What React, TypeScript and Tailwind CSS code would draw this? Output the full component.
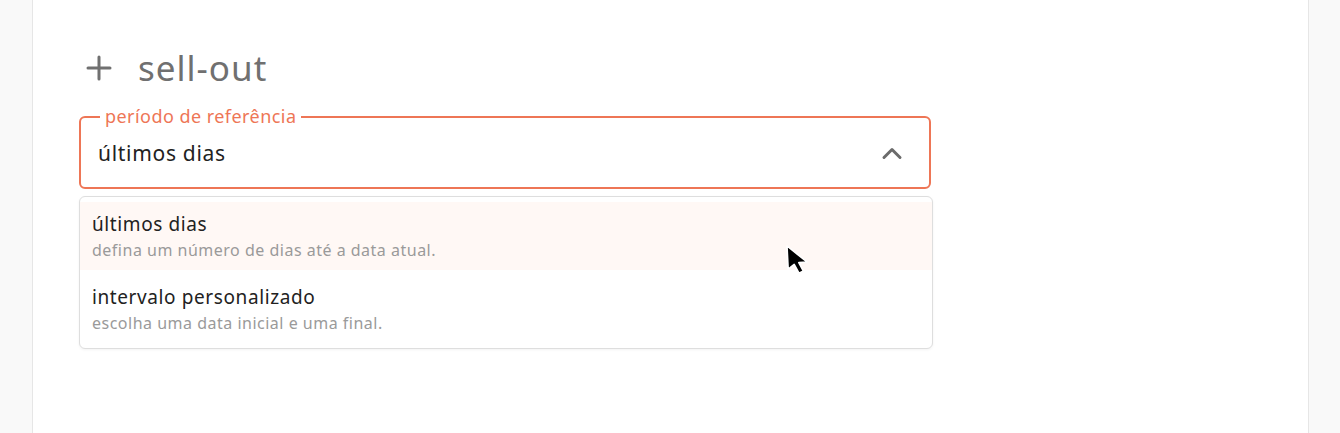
import React from 'react';

const font = { fontFamily: '"Noto Sans", Lato, sans-serif' };

type Option = { title: string; hint: string };

const options: Option[] = [
  { title: 'últimos dias', hint: 'defina um número de dias até a data atual.' },
  { title: 'intervalo personalizado', hint: 'escolha uma data inicial e uma final.' },
];

function OptionRow({ option, active }: { option: Option; active: boolean }): React.ReactElement {
  return (
    <div className={`flex flex-col px-[12px] pb-[7px] ${active ? 'bg-[#fff8f5] pt-[9px]' : 'bg-white pt-[14px]'}`}>
      <span className="text-[19px] leading-[26px] tracking-[0.6px] text-[#222]">{option.title}</span>
      <span className="text-[16px] leading-[26px] tracking-[0.5px] text-[#9a9a9a]">{option.hint}</span>
    </div>
  );
}

function Cursor(): React.ReactElement {
  return (
    <svg className="absolute left-[785px] top-[244px]" width="30" height="31" viewBox="0 0 15 15.5">
      <path
        d="M1 1 L1.6 12.6 L4.6 10.2 L7 14.6 L9.2 13.5 L6.9 9.3 L11 9 Z"
        fill="#000"
        stroke="#fff"
        strokeWidth="0.8"
        strokeLinejoin="round"
      />
    </svg>
  );
}

export default function App(): React.ReactElement {
  return (
    <div className="relative w-[1340px] h-[433px] bg-[#f9f9f9] overflow-hidden" style={font}>
      <div className="ml-[32px] w-[1277px] h-full bg-white border-x border-[#e6e6e6] pt-[44px] pl-[46px]">
        <div className="flex items-center h-[48px]">
          <svg width="26" height="26" viewBox="0 0 26 26" className="ml-[7px]">
            <path d="M13 2 V24 M2 13 H24" stroke="#707070" strokeWidth="3" strokeLinecap="round" />
          </svg>
          <h2 className="ml-[26px] text-[35px] leading-[48px] tracking-[1px] text-[#707070]">sell-out</h2>
        </div>

        <div className="relative mt-[24px] w-[852px] h-[73px] rounded-[6px] border-2 border-[#ee7656] flex items-center pl-[17px] pr-[26px]">
          <span className="absolute -top-[13px] left-[19px] px-[5px] bg-white text-[18px] leading-[22px] tracking-[0.45px] text-[#ee7656]">
            período de referência
          </span>
          <span className="flex-1 text-[21px] leading-[28px] tracking-[0.7px] text-[#222]">últimos dias</span>
          <svg width="22" height="14" viewBox="0 0 22 14">
            <path d="M3 11.5 L11 3.5 L19 11.5" fill="none" stroke="#6b6b6b" strokeWidth="3" strokeLinecap="round" strokeLinejoin="round" />
          </svg>
        </div>

        <div className="mt-[7px] w-[854px] rounded-[6px] border border-[#dedede] bg-white py-[5px] shadow-[0_1px_3px_rgba(0,0,0,0.05)]">
          {options.map((o, i) => (
            <OptionRow key={o.title} option={o} active={i === 0} />
          ))}
        </div>
      </div>
      <Cursor />
    </div>
  );
}
